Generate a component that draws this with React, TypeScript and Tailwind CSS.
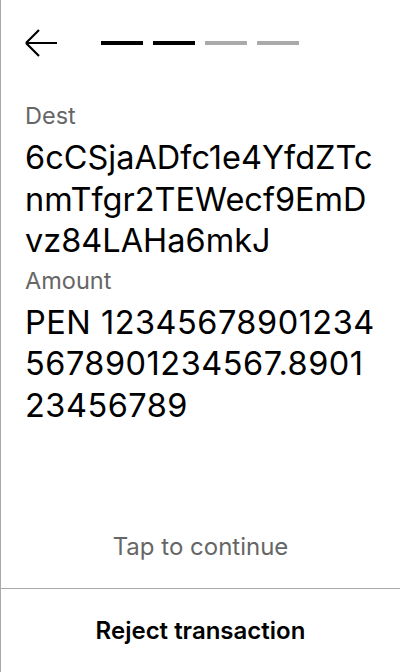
export default function App() {
  const steps = [true, true, false, false];

  return (
    <div
      className="flex flex-col w-[400px] h-[672px] bg-white border-l border-[#aaaaaa] overflow-hidden"
      style={{ fontFamily: "Inter, 'Noto Sans', sans-serif" }}
    >
      <header className="flex flex-row items-center pl-[23px] pt-[29px]">
        <svg width="34" height="28" viewBox="0 0 34 28" fill="none">
          <path
            d="M2 14 L15 1 M2 14 L15 27 M2 14 H33"
            stroke="#000"
            strokeWidth="2.2"
          />
        </svg>
        <div className="flex flex-row gap-[10px] ml-[43px]">
          {steps.map((done, i) => (
            <div
              key={i}
              className={
                done ? "w-[42px] h-[4px] bg-black" : "w-[42px] h-[4px] bg-[#aaaaaa]"
              }
            />
          ))}
        </div>
      </header>

      <main className="flex flex-col pl-[24px] pr-[22px] mt-[45px]">
        <span className="text-[23.5px] leading-[28px] text-[#666666]">Dest</span>
        <p className="text-[32.5px] leading-[41.5px] text-black break-all mt-[7px]">
          6cCSjaADfc1e4YfdZTcnmTfgr2TEWecf9EmDvz84LAHa6mkJ
        </p>
        <span className="text-[23.5px] leading-[28px] text-[#666666] mt-[5px]">
          Amount
        </span>
        <p className="text-[32.5px] leading-[41.5px] tracking-[0.5px] text-black break-all mt-[7px]">
          PEN 123456789012345678901234567.890123456789
        </p>
      </main>

      <div className="flex-1" />

      <div className="flex justify-center pb-[25px]">
        <span className="text-[24px] leading-[32px] text-[#666666]">Tap to continue</span>
      </div>
      <div className="h-px bg-[#aaaaaa]" />
      <button className="h-[83px] flex items-center justify-center text-[24px] font-semibold text-black">
        Reject transaction
      </button>
    </div>
  );
}
